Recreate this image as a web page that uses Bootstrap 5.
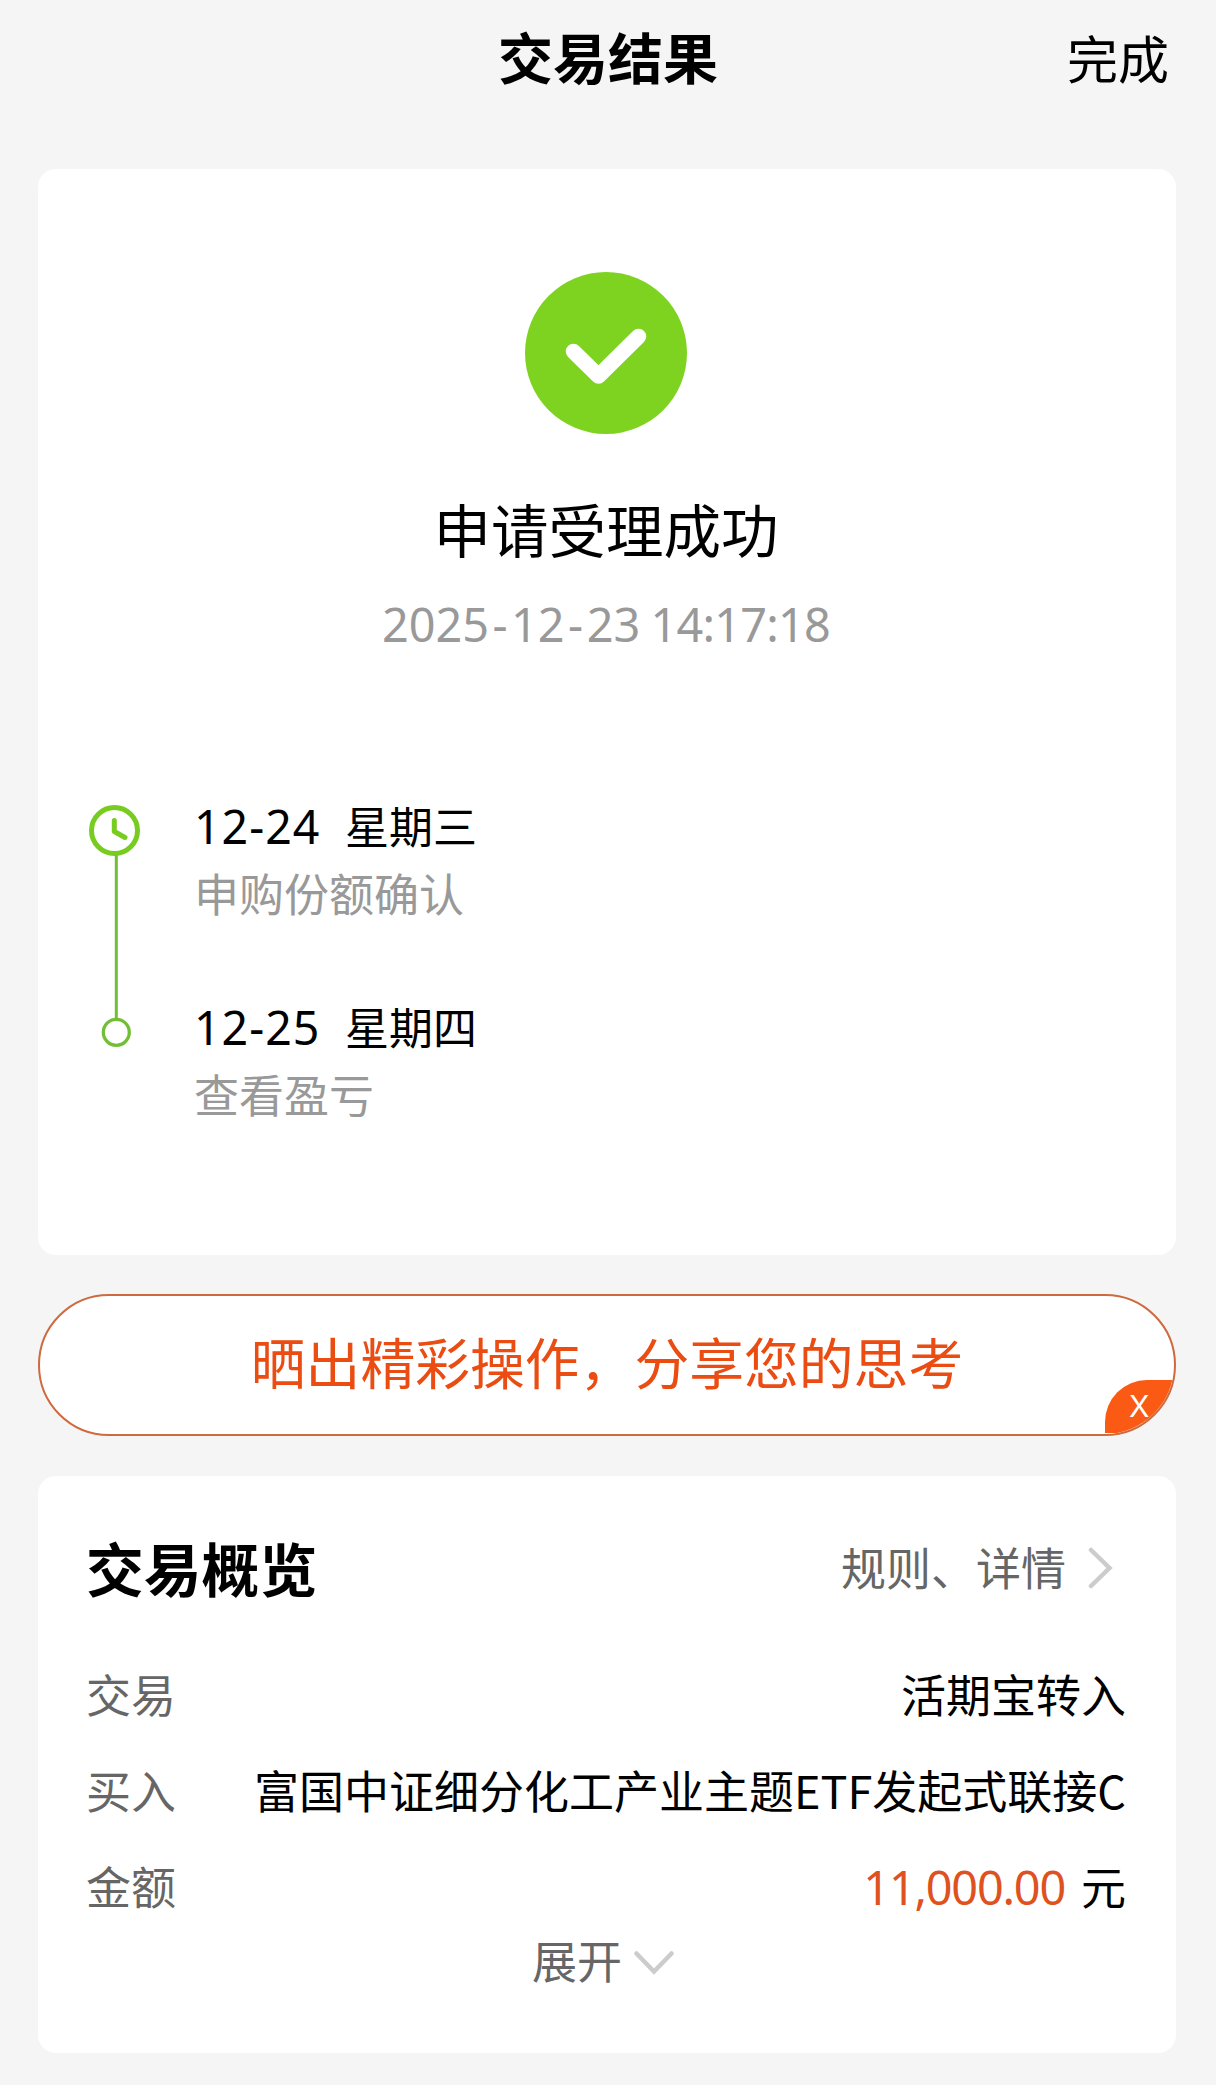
<!DOCTYPE html>
<html lang="zh-CN">
<head>
<meta charset="utf-8">
<meta name="viewport" content="width=device-width, initial-scale=1">
<title>交易结果</title>
<link href="https://cdn.jsdelivr.net/npm/bootstrap@5.3.0/dist/css/bootstrap.min.css" rel="stylesheet">
<style>
body{background:#f5f5f5;color:#000;font-family:"Noto Sans CJK SC",sans-serif;font-size:45px;line-height:50px;min-height:2085px}
svg{display:block;flex:none}
.topbar{height:169px;padding:22px 47px 0}
.topbar h1{font-size:55px;line-height:66px;font-weight:700}
.topbar a{font-size:51px;line-height:70px;color:#000}
.side{flex:1 1 0}
.page{padding:0 40px 0 38px}
.panel{background:#fff;border:0;border-radius:18px}
.result{height:1086px;padding:103px 53px 0 51px}
.num{font-family:"Noto Sans","Noto Sans CJK SC",sans-serif}
.state{font-size:57.5px;line-height:80px;margin-top:54px}
.stamp{font-size:46.8px;line-height:60px;margin-top:26px;color:#999}
.dash{letter-spacing:3.5px;margin-left:3.5px}
.clock{margin-left:-2px;letter-spacing:-.75px}
.timeline{margin-top:147px;gap:54px}
.timeline svg{margin-top:4px}
.step{height:201px}
.step .num{font-size:46.5px;line-height:50px;letter-spacing:1px;width:124px;white-space:nowrap}
.step .day{font-size:44px;line-height:48px;margin-left:27px}
.note{color:#999;margin-top:17px}
.share{height:142px;margin:39px 0 40px;border:2px solid #cf6a3e;border-radius:71px;background:#fff;color:#ea4c12;font-size:54.8px;line-height:80px;padding-bottom:10px;overflow:hidden}
.shut{right:0;bottom:1px;width:69px;height:53px;background:#fa5a14;border-radius:42px 0 0 0;color:#fff;font-family:Inter,sans-serif;font-size:30px;line-height:53px;padding-left:24px}
.summary{height:577px;padding:61px 50px 0 48px}
.summary h2{font-size:57.8px;line-height:60px;font-weight:700}
.soft{color:#666}
.rows{margin-top:72px}
.rows>div{height:96px}
.sum{font-size:46.8px;line-height:52px;letter-spacing:-1.2px;color:#dd5220}
.more{margin-top:-22px}
.more svg{margin-left:12px;margin-right:6px;margin-top:5px}
.enter{margin:2px 0 0 22px}
</style>
</head>
<body>
<header class="topbar d-flex align-items-start">
  <div class="side"></div>
  <h1 class="m-0">交易结果</h1>
  <div class="side text-end"><a href="#" class="text-decoration-none">完成</a></div>
</header>
<main class="page">
  <section class="panel card result">
    <svg class="mx-auto" width="162" height="162" viewBox="0 0 162 162"><circle cx="81" cy="81" r="81" fill="#7ed321"/><path d="M48.500 79.500 73.500 104 113.500 64.500" fill="none" stroke="#fff" stroke-width="15.500" stroke-linecap="round" stroke-linejoin="round"/></svg>
    <div class="state text-center">申请受理成功</div>
    <div class="stamp num text-center">2025<span class="dash">-</span>12<span class="dash">-</span>23 <span class="clock">14:17:18</span></div>
    <div class="timeline d-flex">
      <svg width="51" height="245" viewBox="0 0 51 245" fill="none" stroke="#72bf36"><path d="M27.300 50V213" stroke-width="3"/><circle cx="27.300" cy="227.300" r="13" stroke-width="3.300"/><g stroke="#78cc20" stroke-width="5"><circle cx="25.500" cy="25.500" r="23"/><path d="M25.300 15.500V26.500L36 32.500" stroke-linecap="round" stroke-linejoin="round"/></g></svg>
      <div>
        <div class="step"><div class="d-flex"><span class="num">12-24</span><span class="day">星期三</span></div><div class="note">申购份额确认</div></div>
        <div class="step"><div class="d-flex"><span class="num">12-25</span><span class="day">星期四</span></div><div class="note">查看盈亏</div></div>
      </div>
    </div>
  </section>
  <section class="share position-relative d-flex justify-content-center align-items-center">
    <span>晒出精彩操作，分享您的思考</span>
    <span class="shut position-absolute">X</span>
  </section>
  <section class="panel card summary">
    <div class="d-flex justify-content-between align-items-center">
      <h2 class="m-0">交易概览</h2>
      <a href="#" class="soft text-decoration-none d-flex align-items-center"><span>规则、详情</span><svg class="enter" width="38" height="42" viewBox="0 0 38 42"><path d="M3 3 21.500 21 3 39" fill="none" stroke="#ccc" stroke-width="4.500" stroke-linecap="round"/></svg></a>
    </div>
    <div class="rows">
      <div class="d-flex justify-content-between"><span class="soft">交易</span><span>活期宝转入</span></div>
      <div class="d-flex justify-content-between"><span class="soft">买入</span><span>富国中证细分化工产业主题ETF发起式联接C</span></div>
      <div class="d-flex justify-content-between"><span class="soft">金额</span><span class="d-flex gap-3"><span class="num sum">11,000.00</span><span>元</span></span></div>
    </div>
    <div class="more soft d-flex justify-content-center align-items-center"><span>展开</span><svg width="40" height="24" viewBox="0 0 40 24"><path d="M2.500 2.500 20 20.500 37.500 2.500" fill="none" stroke="#ccc" stroke-width="4.500" stroke-linecap="round"/></svg></div>
  </section>
</main>
<script src="https://cdn.jsdelivr.net/npm/bootstrap@5.3.0/dist/js/bootstrap.bundle.min.js"></script>
</body>
</html>
